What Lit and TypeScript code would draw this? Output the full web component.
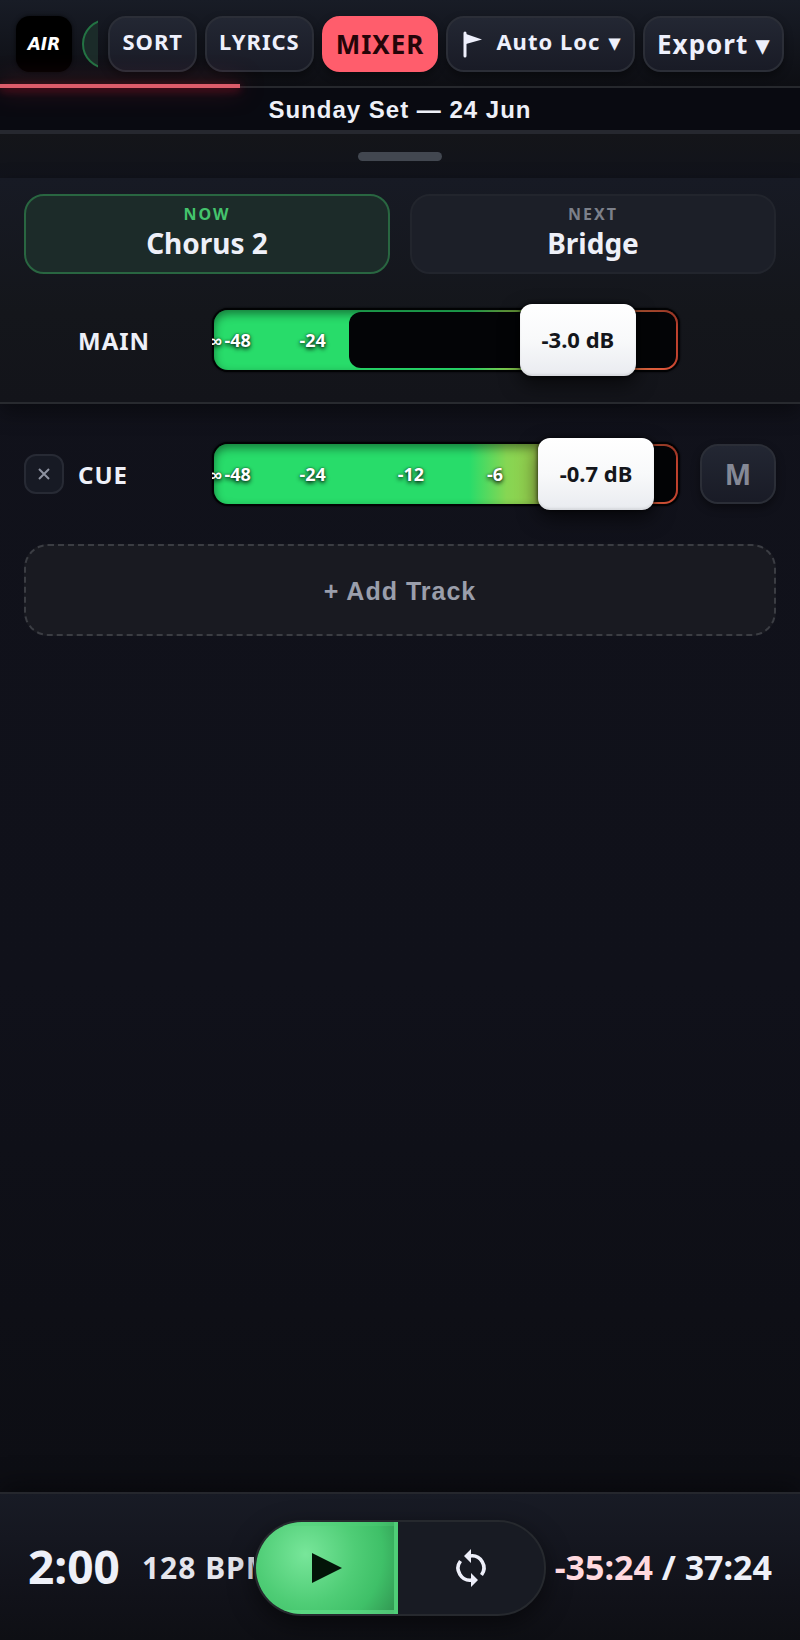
import { LitElement, html, css } from "lit";
import { customElement, property, state } from "lit/decorators.js";
import { classMap } from "lit/directives/class-map.js";
import { styleMap } from "lit/directives/style-map.js";

const TICKS = [
  { label: "∞", at: 0.8 },
  { label: "-48", at: 5.5 },
  { label: "-24", at: 21.5 },
  { label: "-12", at: 42.5 },
  { label: "-6", at: 60.5 },
];

@customElement("level-fader")
class LevelFader extends LitElement {
  @property() label = "";
  @property() readout = "";
  @property({ type: Number }) value = 0;
  @property({ type: Number }) level = 0;

  static styles = css`
    :host {
      display: block;
    }
    .fader {
      position: relative;
      height: 60px;
    }
    .track {
      position: absolute;
      inset: 0;
      border-radius: 14px;
      overflow: hidden;
      background: linear-gradient(
        90deg,
        #28dc6a 0%,
        #28dc6a 55%,
        #86d653 63%,
        #93cf4e 68%,
        #d9963c 80%,
        #f07848 90%,
        #ea5038 100%
      );
    }
    .rim {
      position: absolute;
      inset: 0;
      border-radius: 14px;
      box-shadow: 0 0 0 2px #020304, 0 0 2px 2px #020304;
    }
    .shade {
      position: absolute;
      inset: 0;
      border-radius: 14px;
      box-shadow: inset 0 4px 10px rgba(0, 0, 0, 0.45);
    }
    .empty {
      position: absolute;
      inset: 2px 2px 2px auto;
      border-radius: 12px;
      background: #030406;
    }
    .ticks {
      position: absolute;
      inset: 0 -2px;
      overflow: hidden;
    }
    .tick {
      position: absolute;
      top: 0;
      line-height: 60px;
      transform: translateX(-50%);
      font-size: 18px;
      font-weight: 700;
      color: #fff;
      text-shadow: 0 2px 4px rgba(0, 0, 0, 0.9), 0 0 2px rgba(0, 0, 0, 0.6);
    }
    .range {
      position: absolute;
      left: 0;
      top: -6px;
      width: 100%;
      height: 72px;
      margin: 0;
      background: none;
      appearance: none;
      -webkit-appearance: none;
      cursor: pointer;
    }
    .range::-webkit-slider-thumb {
      -webkit-appearance: none;
      width: 116px;
      height: 72px;
      border-radius: 12px;
      background: linear-gradient(180deg, #ffffff 0%, #f8f9fa 50%, #e9ebf0 100%);
      box-shadow: 0 8px 20px rgba(0, 0, 0, 0.6), 0 0 4px rgba(0, 0, 0, 0.8),
        inset 0 -2px 2px rgba(0, 0, 0, 0.08);
    }
    .readout {
      position: absolute;
      top: -6px;
      width: 116px;
      line-height: 70px;
      text-align: center;
      font-size: 22px;
      font-weight: 700;
      color: #14161b;
      pointer-events: none;
    }
  `;

  render() {
    const share = this.value / 1000;
    return html`
      <div class="fader">
        <div class="rim"></div>
        <div class="track"></div>
        <div class="shade"></div>
        <div class="ticks" aria-hidden="true">
          ${TICKS.map((t) => html`<span class="tick" style=${styleMap({ left: `${t.at}%` })}>${t.label}</span>`)}
        </div>
        <div class="empty" style=${styleMap({ left: `${this.level}%` })}></div>
        <input
          class="range"
          type="range"
          min="0"
          max="1000"
          aria-label="${this.label} level"
          .value=${String(this.value)}
          @input=${(e: Event) => (this.value = Number((e.target as HTMLInputElement).value))}
        />
        <output class="readout" style=${styleMap({ left: `calc((100% - 116px) * ${share})` })}>${this.readout}</output>
      </div>
    `;
  }
}

@customElement("app-root")
class AppRoot extends LitElement {
  @state() muted = false;
  @state() view = "MIXER";

  static styles = css`
    :host {
      display: block;
      font-family: "Noto Sans", "Liberation Sans", sans-serif;
      color: #eef0f8;
    }
    * {
      box-sizing: border-box;
    }
    button {
      font-family: inherit;
      margin: 0;
      cursor: pointer;
    }
    .page {
      min-height: 100vh;
      display: flex;
      flex-direction: column;
      background: linear-gradient(180deg, #11121b 0%, #10111a 60%, #0c0d12 100%);
    }
    .bar {
      position: relative;
      display: flex;
      align-items: center;
      gap: 8px;
      height: 88px;
      padding: 2px 16px 0;
      border-bottom: 2px solid #26282d;
      background: linear-gradient(180deg, #181c26 0%, #0d0e13 100%);
    }
    .logo {
      flex: none;
      display: grid;
      place-items: center;
      width: 56px;
      height: 56px;
      border-radius: 14px;
      background: #000;
      box-shadow: 0 0 4px rgba(0, 0, 0, 0.6);
      font: italic 700 17px/1 "DejaVu Sans", sans-serif;
      color: #fff;
    }
    .songs {
      flex: 1;
      min-width: 0;
      display: flex;
      overflow: hidden;
      margin: 0 2px;
    }
    .song {
      flex: none;
      width: 90px;
      height: 50px;
      border: 2px solid #237343;
      border-radius: 25px;
      background: #1b2b29;
    }
    .btn {
      flex: none;
      display: flex;
      align-items: center;
      justify-content: center;
      height: 56px;
      padding: 0 12px;
      border: 2px solid #2b2e37;
      border-radius: 18px;
      background: linear-gradient(180deg, #232733 0%, #191b26 100%);
      box-shadow: 0 4px 8px rgba(0, 0, 0, 0.4);
      color: #eef0fc;
      font-size: 22px;
      line-height: 28px;
      font-weight: 700;
      letter-spacing: 1px;
      white-space: nowrap;
    }
    .text {
      padding-bottom: 6px;
    }
    .big {
      font-size: 26px;
      line-height: 32px;
    }
    .on {
      border-color: #ff5d6c;
      background: #ff5d6c;
      color: #250509;
    }
    .flag {
      width: 20px;
      height: 28px;
      margin: 0 14px 0 2px;
    }
    .caret {
      margin-left: 2px;
    }
    .progress {
      position: absolute;
      left: 0;
      bottom: -2px;
      height: 4px;
      background: #dc5c6a;
      box-shadow: 0 0 24px rgba(255, 60, 80, 0.5), 0 2px 8px rgba(255, 20, 50, 0.4);
    }
    .title {
      margin: 0;
      height: 46px;
      border-bottom: 4px solid #26282f;
      background: #090a11;
      text-align: center;
      font: 700 24px/44px "Liberation Sans", sans-serif;
      letter-spacing: 1px;
    }
    .grip {
      display: flex;
      justify-content: center;
      height: 44px;
      padding-top: 18px;
      background: linear-gradient(180deg, #141519, #11131b);
    }
    .handle {
      width: 84px;
      height: 9px;
      padding: 0;
      border: 0;
      border-radius: 5px;
      background: #424750;
    }
    .master {
      padding: 16px 24px 32px;
      border-bottom: 2px solid #282a2f;
      background: linear-gradient(180deg, #171a24 0%, #14161b 60%, #13141a 100%);
      box-shadow: 0 8px 20px rgba(0, 0, 0, 0.4);
    }
    .cards {
      display: grid;
      grid-template-columns: 1fr 1fr;
      gap: 20px;
      margin-bottom: 36px;
    }
    .card {
      height: 80px;
      padding-top: 8px;
      border: 2px solid #22252d;
      border-radius: 20px;
      background: #1c1f28;
      text-align: center;
    }
    .now {
      border-color: #296641;
      background: #1c2b29;
    }
    .caption {
      font-size: 16px;
      line-height: 20px;
      font-weight: 700;
      letter-spacing: 2px;
      color: #7c808a;
    }
    .now .caption {
      color: #44c46c;
    }
    .part {
      font-size: 28px;
      line-height: 38px;
      font-weight: 700;
    }
    .row {
      display: grid;
      grid-template-columns: 40px 122px 1fr 76px;
      column-gap: 14px;
      align-items: center;
    }
    .name {
      padding-top: 2px;
      font-size: 24px;
      line-height: 32px;
      font-weight: 700;
      letter-spacing: 1px;
    }
    .row level-fader {
      margin-right: 8px;
    }
    .tracks {
      flex: 1;
      padding: 40px 24px;
    }
    .remove {
      display: grid;
      place-items: center;
      width: 40px;
      height: 40px;
      padding: 0;
      border: 2px solid #272a34;
      border-radius: 12px;
      background: #171a24;
      color: #8d92a0;
    }
    .mute {
      height: 60px;
      padding: 0;
      color: #858996;
      font-size: 28px;
      letter-spacing: 0;
    }
    .add {
      display: block;
      width: 100%;
      height: 92px;
      margin-top: 40px;
      border: 2px dashed #3b3d43;
      border-radius: 24px;
      background: #191a21;
      color: #9a9eab;
      padding: 2px 0 0;
      font: 700 25px/32px "Liberation Sans", sans-serif;
      letter-spacing: 1px;
    }
    .transport {
      display: grid;
      grid-template-columns: minmax(0, 1fr) 292px minmax(0, 1fr);
      align-items: center;
      height: 148px;
      padding: 2px 28px 0;
      border-top: 2px solid #25272d;
      background: linear-gradient(180deg, #181b25 0%, #12131b 60%, #0e0f14 100%);
      box-shadow: 0 -8px 24px rgba(0, 0, 0, 0.4);
      font-weight: 700;
      white-space: nowrap;
    }
    .position {
      display: flex;
      align-items: center;
      gap: 22px;
      overflow: hidden;
    }
    .clock {
      padding-bottom: 4px;
      font-size: 46px;
      line-height: 64px;
    }
    .bpm {
      font-size: 30px;
      line-height: 40px;
      letter-spacing: 1px;
      color: #e4e5ec;
    }
    .pill {
      display: grid;
      grid-template-columns: 142px 1fr;
      height: 96px;
      border: 2px solid #26292e;
      border-radius: 48px;
      overflow: hidden;
      background: #181b23;
      box-shadow: 0 8px 24px rgba(0, 0, 0, 0.5);
    }
    .play,
    .loop {
      display: grid;
      place-items: center;
      padding: 0;
      border: 0;
      background: none;
      color: #eef0fa;
    }
    .play {
      background: radial-gradient(circle at 35% 35%, #78e69a 0%, #4fcd76 45%, #3fc068 70%, #2f914f 100%);
      box-shadow: inset -4px 0 0 #4fce77, inset 0 4px 0 rgba(80, 210, 120, 0.35),
        inset 0 -4px 0 rgba(100, 225, 140, 0.6);
      color: #031408;
    }
    .time {
      justify-self: end;
      padding-bottom: 2px;
      font-size: 34px;
      line-height: 48px;
    }
    .left {
      color: #ffd9df;
    }
  `;

  private tab(name: string, big = false) {
    return html`<button
      class=${classMap({ btn: true, big, on: this.view === name })}
      aria-pressed=${this.view === name}
      @click=${() => (this.view = name)}
    >
      <span class=${big ? "" : "text"}>${name}</span>
    </button>`;
  }

  render() {
    return html`
      <div class="page">
        <header class="bar">
          <div class="logo">AIR</div>
          <div class="songs"><button class="song" aria-label="Current song"></button></div>
          ${this.tab("SORT")} ${this.tab("LYRICS")} ${this.tab("MIXER", true)}
          <button class="btn">
            <svg class="flag" viewBox="0 0 20 28" aria-hidden="true">
              <path d="M3 3V26" stroke="currentColor" stroke-width="3" stroke-linecap="round" />
              <path d="M4 4L20 9.5L4 14Z" fill="currentColor" />
            </svg>
            <span class="text">Auto Loc <span class="caret">▾</span></span>
          </button>
          <button class="btn big">Export ▾</button>
          <div class="progress" style=${styleMap({ width: "30%" })}></div>
        </header>
        <h1 class="title">Sunday Set — 24 Jun</h1>
        <div class="grip"><button class="handle" aria-label="Resize panel"></button></div>
        <section class="master">
          <div class="cards">
            <div class="card now">
              <div class="caption">NOW</div>
              <div class="part">Chorus 2</div>
            </div>
            <div class="card">
              <div class="caption">NEXT</div>
              <div class="part">Bridge</div>
            </div>
          </div>
          <div class="row">
            <span></span>
            <span class="name">MAIN</span>
            <level-fader label="Main" readout="-3.0 dB" .value=${879} .level=${29}></level-fader>
          </div>
        </section>
        <main class="tracks">
          <div class="row">
            <button class="remove" aria-label="Remove CUE">
              <svg width="14" height="14" viewBox="0 0 14 14" aria-hidden="true">
                <path d="M2 2L12 12M12 2L2 12" stroke="currentColor" stroke-width="2" />
              </svg>
            </button>
            <span class="name">CUE</span>
            <level-fader label="Cue" readout="-0.7 dB" .value=${931} .level=${80}></level-fader>
            <button class="btn mute" aria-label="Mute CUE" aria-pressed=${this.muted} @click=${() => (this.muted = !this.muted)}>
              M
            </button>
          </div>
          <button class="add">+ Add Track</button>
        </main>
        <footer class="transport">
          <div class="position">
            <span class="clock">2:00</span>
            <span class="bpm">128 BPM</span>
          </div>
          <div class="pill">
            <button class="play" aria-label="Play">
              <svg width="30" height="32" viewBox="0 0 30 32" aria-hidden="true">
                <path d="M0 1L30 16L0 31Z" fill="currentColor" />
              </svg>
            </button>
            <button class="loop" aria-label="Loop">
              <svg width="36" height="40" viewBox="0 0 36 40" aria-hidden="true">
                <g fill="none" stroke="currentColor" stroke-width="3.6">
                  <path d="M17 8A12 12 0 0 1 28.5 27" />
                  <path d="M19 32A12 12 0 0 1 7.5 13" />
                </g>
                <path d="M18 1V15L11 8Z M18 25V39L25 32Z" fill="currentColor" />
              </svg>
            </button>
          </div>
          <div class="time"><span class="left">-35:24</span> / 37:24</div>
        </footer>
      </div>
    `;
  }
}
